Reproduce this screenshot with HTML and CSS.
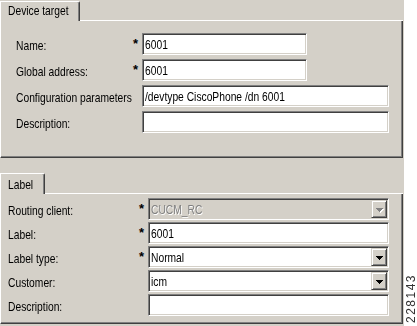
FILE: index.html
```html
<!DOCTYPE html>
<html>
<head>
<meta charset="utf-8">
<link rel="stylesheet" href="styles.css">
</head>
<body>
<div class="page">
  <div class="form">
    <section class="group group-device">
      <div class="tabs">
        <div class="tab tab-device"><span class="t">Device target</span></div>
        <div class="tab-fill"></div>
      </div>
      <div class="panel panel-device">
        <span class="lbl"><span class="t">Name:</span></span>
        <span class="req">*</span>
        <div class="field w-short"><span class="t">6001</span></div>

        <span class="lbl"><span class="t">Global address:</span></span>
        <span class="req">*</span>
        <div class="field w-short"><span class="t">6001</span></div>

        <span class="lbl"><span class="t">Configuration parameters</span></span>
        <span class="req"></span>
        <div class="field w-long"><span class="t">/devtype CiscoPhone /dn 6001</span></div>

        <span class="lbl"><span class="t">Description:</span></span>
        <span class="req"></span>
        <div class="field w-long"></div>
      </div>
    </section>

    <section class="group group-label">
      <div class="tabs">
        <div class="tab tab-label"><span class="t">Label</span></div>
        <div class="tab-fill"></div>
      </div>
      <div class="panel panel-label">
        <span class="lbl"><span class="t">Routing client:</span></span>
        <span class="req">*</span>
        <div class="field combo disabled">
          <span class="t">CUCM_RC</span>
          <span class="drop"><svg width="7" height="4" viewBox="0 0 7 4"><path d="M0 0h7v1h-1v1h-1v1h-1v1h-1v-1h-1v-1h-1v-1h-1z"/></svg></span>
        </div>

        <span class="lbl"><span class="t">Label:</span></span>
        <span class="req">*</span>
        <div class="field"><span class="t">6001</span></div>

        <span class="lbl"><span class="t">Label type:</span></span>
        <span class="req">*</span>
        <div class="field combo">
          <span class="t">Normal</span>
          <span class="drop"><svg width="7" height="4" viewBox="0 0 7 4"><path d="M0 0h7v1h-1v1h-1v1h-1v1h-1v-1h-1v-1h-1v-1h-1z"/></svg></span>
        </div>

        <span class="lbl"><span class="t">Customer:</span></span>
        <span class="req"></span>
        <div class="field combo">
          <span class="t">icm</span>
          <span class="drop"><svg width="7" height="4" viewBox="0 0 7 4"><path d="M0 0h7v1h-1v1h-1v1h-1v1h-1v-1h-1v-1h-1v-1h-1z"/></svg></span>
        </div>

        <span class="lbl"><span class="t">Description:</span></span>
        <span class="req"></span>
        <div class="field"></div>
      </div>
    </section>
  </div>
  <div class="side"><span class="fig">228143</span></div>
</div>
</body>
</html>
```

FILE: styles.css
```css
* { box-sizing: border-box; }

html, body {
  margin: 0;
  padding: 0;
  background: #fff;
}

body {
  font-family: "Liberation Sans", Arial, sans-serif;
  font-size: 13px;
  line-height: 15px;
  color: #000;
}

.page {
  display: flex;
  width: 417px;
  height: 326px;
}

.form {
  width: 404px;
  height: 326px;
  background: #d4d0c8;
  display: flex;
  flex-direction: column;
}

.t {
  display: inline-block;
  white-space: nowrap;
  transform: scaleX(0.79);
  transform-origin: 0 50%;
}

.group {
  width: 403px;
}

.group-label {
  margin-top: 15px;
}

.tabs {
  display: flex;
  height: 21px;
}

.tab {
  border-left: 1px solid #fff;
  border-top: 1px solid #fff;
  border-right: 1px solid #404040;
  border-top-right-radius: 2px;
  box-shadow: inset -1px 0 0 #808080;
  padding: 1px 0 0 7px;
  background: #d4d0c8;
}

.tab-device {
  width: 80px;
  height: 20px;
  margin-top: 1px;
}

.tab-label {
  width: 45px;
  height: 21px;
  padding-top: 3px;
}

.tab-fill {
  flex: 1;
  border-bottom: 1px solid #fff;
}

.panel {
  display: grid;
  align-items: center;
  justify-items: start;
  border-left: 1px solid #fff;
  border-right: 1px solid #404040;
  border-bottom: 1px solid #404040;
  box-shadow: inset -1px -1px 0 #808080;
}

.panel-device {
  height: 137px;
  padding: 12px 0 0 15px;
  grid-template-columns: 117px 9px 1fr;
  grid-auto-rows: 22px;
  row-gap: 4px;
  align-content: start;
}

.panel-label {
  height: 130px;
  padding: 4px 0 0 7px;
  grid-template-columns: 131px 9px 1fr;
  grid-auto-rows: 22px;
  row-gap: 2px;
  align-content: start;
}

.lbl {
  white-space: nowrap;
  padding-top: 2px;
}

.req {
  align-self: start;
  font-weight: bold;
  font-size: 13px;
  line-height: 14px;
  padding-top: 4px;
}

.field {
  height: 22px;
  width: 241px;
  display: flex;
  align-items: center;
  background: #fff;
  border: 1px solid;
  border-color: #808080 #fff #fff #808080;
  box-shadow: inset 1px 1px 0 #404040, inset -1px -1px 0 #d4d0c8;
  padding: 1px 1px 0 2px;
}

.w-short { width: 165px; }
.w-long { width: 247px; }

.combo .t { flex: 1; }

.drop {
  width: 16px;
  height: 18px;
  margin-top: -1px;
  display: flex;
  align-items: center;
  justify-content: center;
  background: #d4d0c8;
  border: 1px solid;
  border-color: #d4d0c8 #404040 #404040 #d4d0c8;
  box-shadow: inset 1px 1px 0 #fff, inset -1px -1px 0 #808080;
}

.drop svg {
  display: block;
  fill: #000;
  margin-top: 1px;
}

.disabled {
  background: #d4d0c8;
}

.disabled .t {
  color: #808080;
  text-shadow: 1px 1px 0 #fff;
}

.disabled .drop svg {
  fill: #808080;
  filter: drop-shadow(1px 1px 0 #fff);
}

.side {
  flex: 1;
  display: flex;
  justify-content: center;
  align-items: flex-end;
  padding-bottom: 3px;
}

.fig {
  writing-mode: vertical-rl;
  transform: rotate(180deg);
  font-size: 12px;
  line-height: 12px;
  letter-spacing: 1.5px;
  color: #333;
}
```
